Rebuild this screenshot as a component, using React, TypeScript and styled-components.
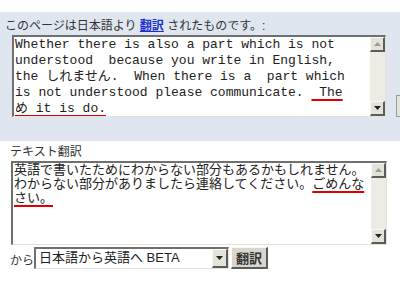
import styled, { createGlobalStyle } from 'styled-components'

const GlobalStyle = createGlobalStyle`
  body {
    margin: 0;
    background: #fff;
  }
`

const sans = `"Liberation Sans", "Noto Sans CJK JP", sans-serif`
const mono = `"Liberation Mono", "Noto Sans CJK JP", monospace`

const Page = styled.div`
  width: 400px;
  height: 300px;
  overflow: hidden;
  box-sizing: border-box;
  padding-top: 12px;
  background: #fff;
  font-family: ${sans};
  color: #333;
`

const SourcePanel = styled.section`
  height: 129px;
  box-sizing: border-box;
  padding: 7px 0 0 5px;
  background: #dfe6f0;
`

const Label = styled.div<{ $indent?: number }>`
  font-size: 12px;
  line-height: 14px;
  height: 14px;
  padding-left: ${(p) => p.$indent ?? 0}px;
  white-space: nowrap;
`

const Link = styled.a`
  color: #1a2fd0;
  font-weight: bold;
  text-decoration: underline;
`

const BoxRow = styled.div`
  display: flex;
  align-items: flex-end;
  margin-top: 2px;
`

const TextBox = styled.div<{ $w: number; $h: number; $left: number }>`
  display: flex;
  width: ${(p) => p.$w}px;
  height: ${(p) => p.$h}px;
  margin-left: ${(p) => p.$left}px;
  box-sizing: border-box;
  background: #fff;
  border-style: solid;
  border-width: 2px 1px 1px 2px;
  border-color: #6f6f6f #e2e1da #e2e1da #6f6f6f;
  flex-shrink: 0;
`

const Content = styled.div<{ $mono?: boolean; $lh: number }>`
  flex: 1;
  padding: 0 0 0 1px;
  font-family: ${(p) => (p.$mono ? mono : sans)};
  font-size: 13px;
  line-height: ${(p) => p.$lh}px;
  color: #222;
  white-space: pre;
  overflow: hidden;
`

const Marked = styled.span`
  text-decoration: underline;
  text-decoration-color: #e00000;
  text-decoration-thickness: 2px;
  text-underline-offset: 3px;
`

const Scrollbar = styled.div`
  width: 15px;
  display: flex;
  flex-direction: column;
  background: #ecebe4;
`

const ArrowBtn = styled.div`
  width: 15px;
  height: 15px;
  box-sizing: border-box;
  display: flex;
  align-items: center;
  justify-content: center;
  background: #e4e3da;
  border-style: solid;
  border-width: 1px 2px 2px 1px;
  border-color: #f8f8f4 #5c5c5c #5c5c5c #f8f8f4;
`

const Track = styled.div`
  flex: 1;
`

const EdgeButton = styled.div`
  width: 30px;
  height: 22px;
  margin-left: 10px;
  box-sizing: border-box;
  background: #e4e3da;
  border: 1px solid #9a9a9a;
  flex-shrink: 0;
`

const TargetPanel = styled.section`
  padding-top: 4px;
`

const Controls = styled.div`
  display: flex;
  align-items: center;
  margin-top: 2px;
  padding-left: 10px;
  font-size: 12px;
`

const From = styled.span`
  width: 24px;
  padding-top: 3px;
`

const Select = styled.div`
  width: 195px;
  height: 22px;
  box-sizing: border-box;
  display: flex;
  background: #fff;
  border-style: solid;
  border-width: 2px 1px 1px 2px;
  border-color: #6f6f6f #e2e1da #e2e1da #6f6f6f;
`

const SelectText = styled.div`
  flex: 1;
  padding-left: 3px;
  font-size: 13px;
  line-height: 18px;
  color: #222;
`

const DropBtn = styled(ArrowBtn)`
  width: 16px;
  height: 19px;
`

const Button = styled.button`
  margin-left: 2px;
  width: 37px;
  height: 22px;
  padding: 0;
  box-sizing: border-box;
  background: #d8d6cc;
  border-style: solid;
  border-width: 1px 2px 2px 1px;
  border-color: #f8f8f4 #5c5c5c #5c5c5c #f8f8f4;
  font-family: ${sans};
  font-size: 13px;
  font-weight: bold;
  color: #333;
`

const Arrow = ({ down }: { down?: boolean }) => (
  <svg width="7" height="4" viewBox="0 0 7 4">
    <path d={down ? 'M0 0h7L3.5 4z' : 'M0 4h7L3.5 0z'} fill={down ? '#222' : '#9a9a9a'} />
  </svg>
)

const Scroll = () => (
  <Scrollbar>
    <ArrowBtn><Arrow /></ArrowBtn>
    <Track />
    <ArrowBtn><Arrow down /></ArrowBtn>
  </Scrollbar>
)

export default function App() {
  return (
    <Page>
      <GlobalStyle />
      <SourcePanel>
        <Label>
          このページは日本語より <Link href="#">翻訳</Link> されたものです。:
        </Label>
        <BoxRow>
          <TextBox $w={374} $h={82} $left={7}>
            <Content $mono $lh={16}>
              {'Whether there is also a part which is not\n'}
              {'understood  because you write in English,\n'}
              {'the しれません.  When there is a  part which\n'}
              {'is not understood please communicate. '}
              <Marked>{' The'}</Marked>
              {'\n'}
              <Marked>め it is do.</Marked>
            </Content>
            <Scroll />
          </TextBox>
          <EdgeButton />
        </BoxRow>
      </SourcePanel>
      <TargetPanel>
        <Label $indent={10}>テキスト翻訳</Label>
        <BoxRow>
          <TextBox $w={376} $h={84} $left={11}>
            <Content $lh={14}>
              {'英語で書いたためにわからない部分もあるかもしれません。\n'}
              {'わからない部分がありましたら連絡してください。'}
              <Marked>ごめんな</Marked>
              {'\n'}
              <Marked>さい。</Marked>
            </Content>
            <Scroll />
          </TextBox>
        </BoxRow>
        <Controls>
          <From>から</From>
          <Select>
            <SelectText>日本語から英語へ BETA</SelectText>
            <DropBtn><Arrow down /></DropBtn>
          </Select>
          <Button>翻訳</Button>
        </Controls>
      </TargetPanel>
    </Page>
  )
}
